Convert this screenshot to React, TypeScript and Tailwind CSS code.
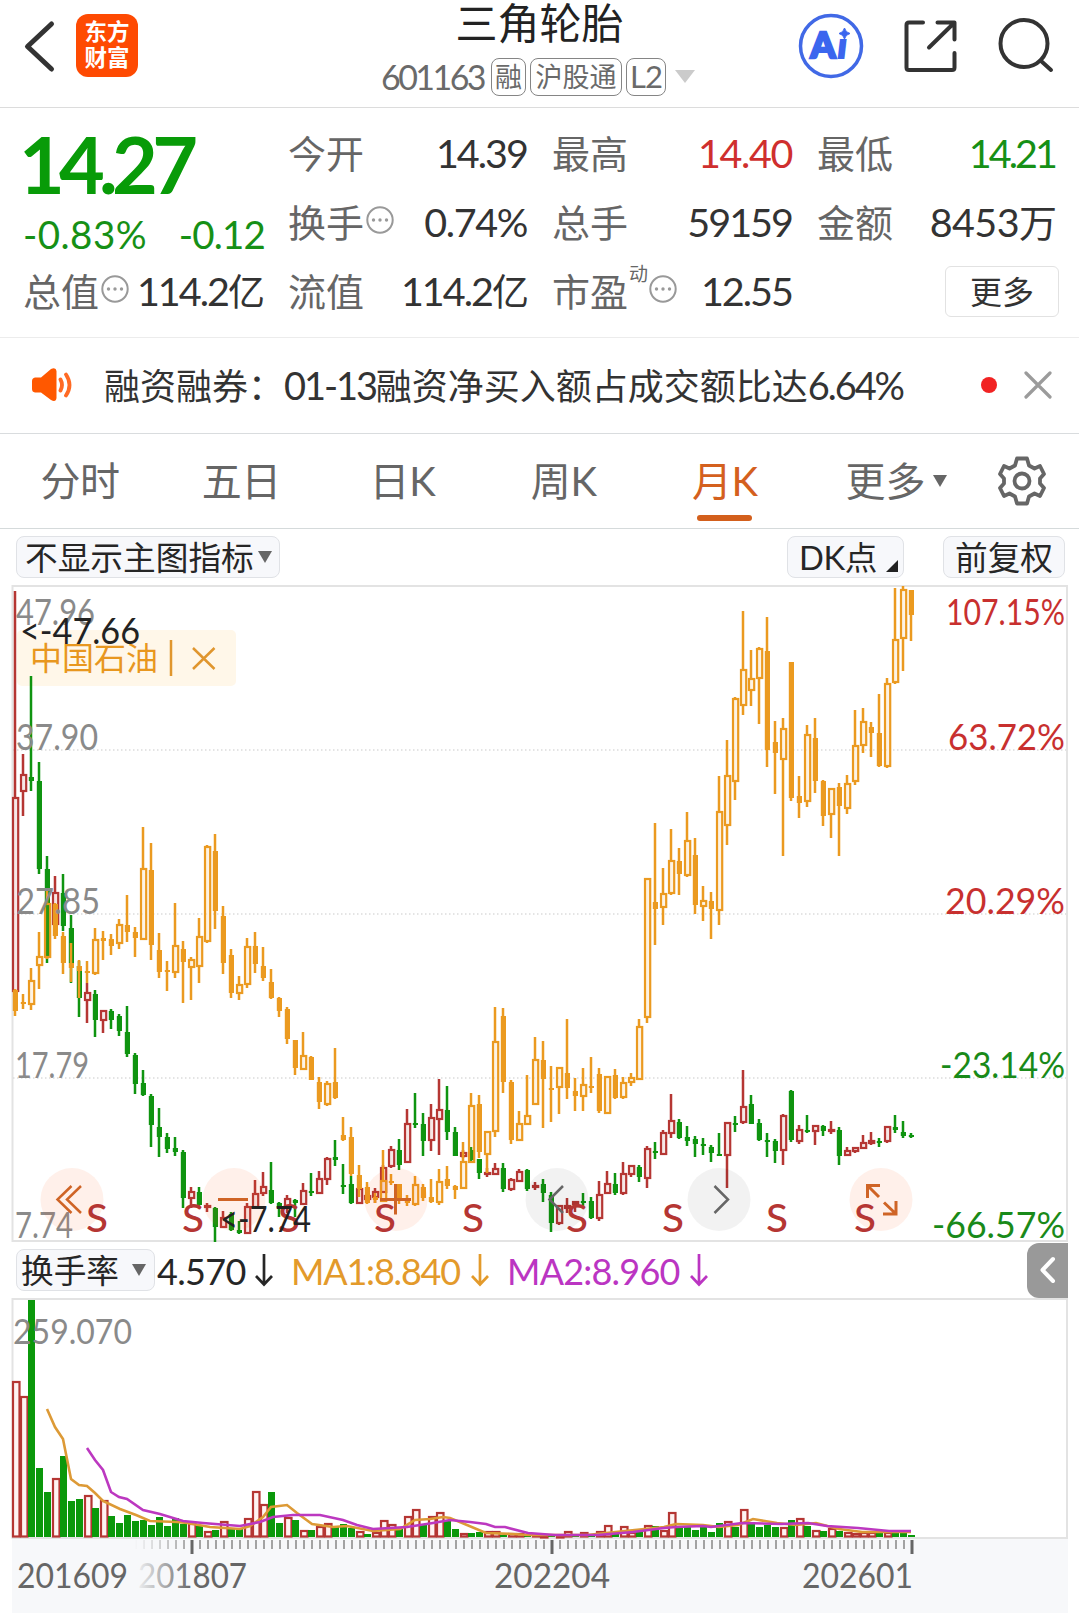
import { ReactNode } from "react";

// [high, bodyTop, bodyBottom, low, filled]
type Candle = [number, number, number, number, number];

const stock: Candle[] = [
  [591, 797, 992, 992, 0], [754, 774, 792, 816, 0], [676, 777, 781, 791, 1], [762, 781, 869, 874, 1],
  [856, 869, 958, 963, 1], [876, 892, 925, 925, 0], [874, 893, 926, 931, 1], [915, 928, 963, 983, 1],
  [961, 966, 998, 1017, 1], [983, 992, 1001, 1023, 0], [990, 994, 1020, 1037, 1], [1010, 1010, 1021, 1033, 0],
  [1009, 1011, 1020, 1029, 1], [1014, 1016, 1031, 1036, 1], [1006, 1032, 1054, 1057, 1], [1053, 1055, 1084, 1094, 1],
  [1070, 1083, 1095, 1096, 1], [1094, 1096, 1125, 1147, 1], [1108, 1127, 1137, 1157, 1], [1133, 1137, 1149, 1153, 1],
  [1137, 1148, 1152, 1156, 1], [1150, 1152, 1198, 1208, 1], [1187, 1191, 1199, 1208, 0], [1187, 1192, 1205, 1207, 1],
  [1203, 1205, 1208, 1212, 0], [1207, 1208, 1227, 1242, 1], [1211, 1217, 1228, 1228, 0], [1212, 1214, 1230, 1231, 1],
  [1221, 1230, 1233, 1234, 1], [1203, 1206, 1234, 1234, 0], [1180, 1193, 1208, 1208, 0], [1172, 1186, 1194, 1196, 0],
  [1162, 1190, 1203, 1204, 1], [1202, 1203, 1208, 1217, 1], [1195, 1198, 1207, 1213, 0], [1199, 1200, 1203, 1217, 1],
  [1183, 1190, 1205, 1205, 0], [1173, 1191, 1193, 1196, 1], [1171, 1178, 1194, 1194, 0], [1157, 1158, 1180, 1185, 0],
  [1140, 1157, 1160, 1166, 1], [1164, 1185, 1187, 1194, 1], [1176, 1184, 1203, 1204, 1], [1187, 1188, 1204, 1204, 0],
  [1192, 1195, 1200, 1203, 0], [1188, 1191, 1198, 1203, 0], [1165, 1167, 1193, 1193, 0], [1146, 1149, 1167, 1168, 0],
  [1139, 1150, 1165, 1170, 1], [1109, 1123, 1163, 1163, 0], [1093, 1123, 1125, 1128, 1], [1113, 1124, 1141, 1156, 1],
  [1104, 1117, 1141, 1151, 0], [1079, 1109, 1120, 1155, 0], [1086, 1110, 1132, 1140, 1], [1127, 1132, 1156, 1156, 1],
  [1150, 1152, 1157, 1158, 0], [1147, 1150, 1160, 1163, 1], [1159, 1159, 1173, 1179, 1], [1168, 1172, 1175, 1177, 0],
  [1163, 1168, 1175, 1175, 0], [1163, 1168, 1189, 1192, 1], [1178, 1179, 1190, 1191, 0], [1169, 1171, 1182, 1182, 0],
  [1169, 1170, 1189, 1191, 1], [1182, 1185, 1188, 1190, 0], [1179, 1184, 1193, 1202, 1], [1192, 1195, 1223, 1232, 1],
  [1205, 1205, 1224, 1225, 0], [1198, 1205, 1209, 1213, 0], [1201, 1201, 1205, 1212, 0], [1193, 1201, 1203, 1207, 1],
  [1197, 1201, 1218, 1219, 1], [1181, 1194, 1219, 1221, 0], [1171, 1183, 1194, 1194, 0], [1173, 1184, 1193, 1195, 1],
  [1162, 1173, 1194, 1195, 0], [1165, 1165, 1175, 1177, 0], [1165, 1167, 1177, 1182, 1], [1146, 1148, 1179, 1188, 0],
  [1142, 1151, 1153, 1159, 1], [1130, 1132, 1155, 1155, 0], [1094, 1120, 1134, 1138, 0], [1119, 1122, 1138, 1139, 1],
  [1126, 1137, 1141, 1146, 1], [1136, 1139, 1144, 1157, 1], [1138, 1144, 1146, 1155, 1], [1145, 1147, 1153, 1162, 1],
  [1133, 1154, 1156, 1156, 1], [1122, 1122, 1156, 1188, 0], [1116, 1123, 1125, 1132, 1], [1070, 1106, 1123, 1124, 0],
  [1095, 1104, 1124, 1124, 1], [1119, 1123, 1140, 1141, 1], [1133, 1140, 1141, 1157, 1], [1139, 1141, 1151, 1163, 1],
  [1114, 1115, 1151, 1165, 0], [1090, 1091, 1140, 1142, 1], [1125, 1129, 1142, 1144, 0], [1115, 1130, 1132, 1133, 1],
  [1125, 1125, 1132, 1145, 0], [1125, 1126, 1131, 1136, 1], [1121, 1129, 1131, 1134, 0], [1127, 1130, 1156, 1165, 1],
  [1147, 1150, 1156, 1156, 0], [1147, 1147, 1152, 1153, 0], [1135, 1142, 1149, 1149, 0], [1132, 1140, 1144, 1145, 0],
  [1138, 1141, 1143, 1147, 1], [1126, 1126, 1142, 1143, 0], [1115, 1127, 1130, 1133, 1], [1121, 1132, 1136, 1138, 1],
  [1133, 1135, 1137, 1138, 1],
];

const compare: Candle[] = [
  [989, 990, 1011, 1016, 1], [994, 1002, 1004, 1009, 1], [968, 980, 1005, 1010, 0], [932, 956, 966, 989, 0],
  [888, 903, 958, 959, 0], [903, 904, 936, 939, 1], [932, 936, 963, 974, 1], [943, 963, 968, 982, 1],
  [960, 966, 971, 998, 1], [961, 971, 973, 983, 1], [928, 939, 974, 975, 0], [931, 938, 941, 960, 1],
  [934, 939, 946, 955, 1], [919, 924, 944, 949, 0], [895, 925, 932, 942, 1], [927, 932, 938, 957, 1],
  [827, 868, 940, 940, 0], [843, 870, 945, 960, 1], [933, 950, 972, 978, 1], [961, 970, 972, 991, 1],
  [903, 945, 973, 978, 0], [941, 949, 962, 1003, 1], [957, 959, 968, 1000, 0], [918, 936, 967, 983, 0],
  [845, 846, 942, 943, 0], [834, 851, 911, 929, 1], [906, 916, 963, 974, 1], [949, 955, 993, 998, 1],
  [976, 984, 994, 1000, 0], [938, 946, 985, 988, 0], [932, 946, 964, 973, 1], [947, 966, 978, 981, 1],
  [969, 982, 998, 999, 1], [997, 998, 1011, 1017, 1], [1007, 1009, 1039, 1044, 1], [1040, 1040, 1068, 1075, 1],
  [1032, 1055, 1070, 1070, 0], [1056, 1057, 1080, 1080, 1], [1077, 1082, 1102, 1109, 1], [1081, 1083, 1105, 1106, 0],
  [1048, 1082, 1098, 1099, 1], [1117, 1135, 1140, 1141, 1], [1127, 1137, 1174, 1176, 1], [1165, 1175, 1189, 1197, 1],
  [1182, 1187, 1203, 1204, 1], [1193, 1197, 1200, 1203, 1], [1150, 1180, 1202, 1202, 0], [1174, 1181, 1183, 1185, 1],
  [1184, 1184, 1199, 1204, 1], [1195, 1199, 1203, 1206, 1], [1176, 1184, 1205, 1206, 0], [1184, 1187, 1198, 1201, 1],
  [1179, 1197, 1202, 1203, 1], [1169, 1181, 1203, 1205, 0], [1166, 1179, 1186, 1189, 1], [1185, 1186, 1190, 1199, 1],
  [1142, 1161, 1189, 1189, 0], [1093, 1105, 1163, 1163, 0], [1095, 1104, 1152, 1158, 1], [1131, 1131, 1155, 1173, 0],
  [1007, 1041, 1132, 1137, 0], [1008, 1016, 1082, 1093, 1], [1080, 1082, 1140, 1144, 1], [1111, 1123, 1141, 1141, 0],
  [1075, 1115, 1125, 1125, 0], [1037, 1059, 1105, 1105, 0], [1041, 1060, 1079, 1128, 1], [1066, 1088, 1090, 1122, 1],
  [1067, 1067, 1088, 1114, 0], [1019, 1073, 1088, 1099, 1], [1078, 1091, 1096, 1111, 1], [1068, 1084, 1097, 1111, 0],
  [1057, 1086, 1088, 1093, 1], [1068, 1074, 1111, 1113, 1], [1076, 1076, 1114, 1114, 0], [1069, 1075, 1098, 1099, 1],
  [1077, 1082, 1098, 1099, 0], [1073, 1077, 1083, 1086, 0], [1019, 1026, 1080, 1080, 0], [878, 878, 1018, 1023, 0],
  [823, 902, 909, 945, 1], [868, 893, 908, 925, 0], [829, 860, 894, 895, 0], [848, 861, 874, 895, 1],
  [812, 840, 876, 877, 0], [838, 855, 905, 914, 1], [886, 900, 907, 921, 0], [892, 901, 909, 939, 1],
  [776, 811, 911, 925, 0], [740, 775, 826, 845, 0], [697, 698, 782, 800, 0], [611, 669, 706, 715, 0],
  [650, 678, 691, 706, 0], [647, 648, 679, 724, 0], [617, 651, 750, 767, 1], [721, 742, 753, 794, 1],
  [718, 728, 760, 856, 0], [662, 662, 798, 801, 1], [776, 796, 803, 818, 1], [725, 734, 802, 807, 0],
  [718, 738, 781, 793, 1], [780, 781, 816, 826, 1], [788, 788, 815, 838, 0], [783, 787, 806, 856, 1],
  [775, 783, 809, 814, 0], [710, 745, 782, 785, 0], [708, 721, 746, 753, 0], [722, 727, 733, 757, 1],
  [694, 733, 766, 767, 1], [678, 683, 767, 768, 0], [588, 639, 683, 684, 0], [586, 589, 639, 671, 0],
  [590, 590, 615, 641, 1],
];

// turnover bar heights, negative = green month
const turnover = [
  156, 141, -237, -69, -45, 59, -81, -36, -38, 42, -29, 37, -21, -14, -22, -16, -17, -12, -20, -11,
  -19, -13, 14, -11, 6, -7, 16, -8, -8, 19, 46, 33, -45, -14, 20, -17, 7, -7, 11, 14,
  -10, -13, -9, 6, -3, 5, 17, 13, -8, 21, 28, -12, 21, 25, -16, -8, 4, -4, -5, 6,
  6, -2, 4, 4, -2, 2, 1, -1, 1, 6, -2, 5, -2, 6, 12, -4, 11, 5, -7, 12,
  -11, 7, 25, -10, -10, -7, -10, -5, -14, 16, -10, 28, -15, -10, -12, -10, 10, -17, 19, -11,
  7, -6, 9, -6, 5, 4, 5, 5, -4, 5, -5, -5, -2,
];

const ma1 =
  "47,1409 55,1427 63,1439 71,1479 79,1485 87,1486 95,1493 103,1501 120,1509 136,1515 150,1521 177,1522 187,1523 210,1527 240,1529 250,1526 263,1517 271,1507 287,1505 297,1513 312,1524 333,1527 347,1526 373,1531 400,1529 415,1520 430,1519 443,1517 450,1518 467,1525 486,1533 513,1534 528,1535 587,1535 625,1531 664,1527 676,1524 703,1525 719,1527 738,1525 753,1519 777,1523 796,1525 816,1523 839,1529 862,1532 889,1532 911,1532";
const ma2 =
  "87,1448 95,1460 103,1470 111,1492 119,1497 127,1499 143,1510 160,1514 183,1521 203,1523 240,1526 260,1522 273,1517 293,1515 320,1515 343,1520 357,1525 373,1529 407,1527 433,1523 450,1520 470,1522 486,1524 495,1527 505,1527 528,1533 555,1535 598,1535 633,1532 664,1528 676,1527 703,1526 711,1527 742,1523 781,1524 808,1523 827,1526 858,1528 889,1531 911,1531";

const RED = "#b53633";
const GREEN = "#0f9410";
const ORANGE = "#eb9a20";

function Candles({ data, up, down }: { data: Candle[]; up: string; down: string }) {
  return (
    <g>
      {data.map(([high, top, bottom, low, filled], i) => {
        const x = 15 + i * 8;
        const color = filled ? down : up;
        const height = Math.max(bottom - top, 2);
        return (
          <g key={i}>
            <rect x={x - 1.25} y={high} width={2.5} height={Math.max(top - high, 0)} fill={color} />
            <rect x={x - 1.25} y={bottom} width={2.5} height={Math.max(low - bottom, 0)} fill={color} />
            {filled ? (
              <rect x={x - 2.2} y={top} width={5.2} height={height} fill={color} />
            ) : (
              <rect
                x={x - 2}
                y={top + 1}
                width={5.2}
                height={Math.max(height - 2, 1)}
                fill={color}
                fillOpacity={0.12}
                stroke={color}
                strokeWidth={2.2}
              />
            )}
          </g>
        );
      })}
    </g>
  );
}

function Label({ x, y, width, size = 36, fill = "#8a8a8a", weight = 400, children }: {
  x: number;
  y: number;
  width: number;
  size?: number;
  fill?: string;
  weight?: number;
  children: string;
}) {
  return (
    <text x={x} y={y} textLength={width} lengthAdjust="spacingAndGlyphs" fontSize={size} fontWeight={weight} fill={fill}>
      {children}
    </text>
  );
}

function MainChart() {
  return (
    <svg className="block overflow-visible" width="1079" height="657" viewBox="0 585 1079 657">
      <path d="M12.5 1241V586H1067V1241Z" fill="none" stroke="#e3e3e3" strokeWidth="2" />
      <path d="M13 750H1066M13 914H1066M13 1078H1066" stroke="#dcdcdc" strokeWidth="1.5" strokeDasharray="1.5 2.5" />
      <rect x="17" y="630" width="219" height="56" rx="5" fill="#fff7e9" />

      <Candles data={stock} up={RED} down={GREEN} />
      <Candles data={compare} up={ORANGE} down={ORANGE} />

      <Label x={16} y={625} width={79}>47.96</Label>
      <Label x={16} y={750} width={82}>37.90</Label>
      <Label x={16} y={914} width={84}>27.85</Label>
      <Label x={15} y={1078} width={74}>17.79</Label>
      <Label x={15} y={1238} width={58}>7.74</Label>

      <Label x={30} y={670} width={128} size={32} fill="#e8971f">中国石油</Label>
      <path d="M171 640V676M193 648L214.500 669M214.500 648L193 669" stroke="#e0962e" strokeWidth="2.500" fill="none" />
      <Label x={20} y={644} width={120} fill="#222">&lt;-47.66</Label>

      <Label x={946} y={625} width={119} fill="#c8302f">107.15%</Label>
      <Label x={948} y={750} width={117} fill="#c8302f">63.72%</Label>
      <Label x={945} y={914} width={120} fill="#c8302f">20.29%</Label>
      <Label x={940} y={1078} width={125} fill="#198a19">-23.14%</Label>
      <Label x={932} y={1238} width={133} fill="#198a19">-66.57%</Label>

      {[72, 234, 396, 557, 719, 881].map((cx) => (
        <circle
          key={cx}
          cx={cx}
          cy="1199.500"
          r="31.500"
          fill={cx === 557 || cx === 719 ? "#000" : "#ff5a14"}
          fillOpacity={cx === 557 || cx === 719 ? 0.05 : 0.09}
        />
      ))}
      {[97, 193, 289, 385, 473, 577, 673, 777, 865].map((cx) => (
        <Label key={cx} x={cx - 11} y={1231.5} width={22} size={39} weight={500} fill={RED}>S</Label>
      ))}
      <Label x={220} y={1232} width={91} fill="#222">&lt;-7.74</Label>

      <g fill="none" stroke="#cf6426" strokeWidth="2.500">
        <path d="M71.500 1186L57.500 1199.500L71.500 1213M81 1186L67 1199.500L81 1213" />
        <path d="M218 1199.500H248M380 1199.500H411M395.500 1184V1214.500" strokeWidth="3" />
        <path d="M880 1185.500H867.500V1198M868 1186L879 1197M883 1214H896V1201M895.500 1213.500L884 1202.500" strokeWidth="3" />
      </g>
      <g fill="none" stroke="#666" strokeWidth="2.500">
        <path d="M563 1186L549.500 1199.500L563 1213" />
        <path d="M714.500 1186L728 1199.500L714.500 1213" />
      </g>
    </svg>
  );
}

function TurnoverChart() {
  return (
    <svg className="block" width="1079" height="315" viewBox="0 1298 1079 315">
      <defs>
        <linearGradient id="axis-fade" gradientUnits="userSpaceOnUse" x1="134" x2="192" y1="0" y2="0">
          <stop offset="0" stopColor="#f7f8fa" />
          <stop offset="1" stopColor="#f7f8fa" stopOpacity="0" />
        </linearGradient>
      </defs>
      <rect x="12" y="1539" width="1056" height="74" fill="#f7f8fa" />
      <path d="M12.500 1538V1299H1067V1538Z" fill="none" stroke="#e3e3e3" strokeWidth="2" />

      {turnover.map((value, i) => {
        const h = Math.abs(value);
        const y = 1537 - h;
        return value < 0 ? (
          <rect key={i} x={12 + i * 8} y={y} width={7} height={h} fill="#0b980b" />
        ) : (
          <rect key={i} x={13 + i * 8} y={y + 1} width={6.5} height={Math.max(h - 1.5, 0.5)} fill="#fff3f2" stroke={RED} strokeWidth={2.2} />
        );
      })}
      <polyline points={ma1} fill="none" stroke="#dd9a36" strokeWidth="2.600" />
      <polyline points={ma2} fill="none" stroke="#bc38c0" strokeWidth="2.600" />
      <Label x={13} y={1344} width={119} size={34}>259.070</Label>

      {turnover.map((_, i) =>
        i < 15 ? null : i === 22 || i === 67 || i === 112 ? (
          <rect key={i} x={14.5 + i * 8} y={1540} width={3} height={14} fill="#666" />
        ) : (
          <rect key={i} x={15 + i * 8} y={1540} width={2} height={9} fill="#a3a3a3" />
        )
      )}
      <Label x={17} y={1588} width={111} size={34} fill="#666">201609</Label>
      <Label x={138} y={1588} width={109} size={34} fill="#666">201807</Label>
      <Label x={494} y={1588} width={116} size={34} fill="#666">202204</Label>
      <Label x={802} y={1588} width={111} size={34} fill="#666">202601</Label>
      <rect x="132" y="1540" width="60" height="56" fill="url(#axis-fade)" />
    </svg>
  );
}

function Header() {
  return (
    <header className="flex h-[108px] items-start border-b border-[#dcdcdc]">
      <div className="flex w-[381px] items-center pt-[14px] pl-[22px]">
        <svg width="36" height="56" viewBox="0 0 36 56" fill="none" stroke="#333" strokeWidth="5" strokeLinecap="round" strokeLinejoin="round">
          <path d="M29.500 6L5.500 28.500L29.500 51" />
        </svg>
        <div className="ml-[18px] flex h-[63px] w-[62px] flex-col items-center justify-center rounded-xl bg-[#fe4a02] pb-[2px] text-[22.500px] leading-[26px] font-bold text-white">
          <span>东方</span>
          <span>财富</span>
        </div>
      </div>
      <div className="flex w-[317px] flex-col items-center">
        <h1 className="text-[42px] leading-[47px] text-[#222]">三角轮胎</h1>
        <div className="mt-[10px] flex h-[39px] w-full items-center text-[27px] whitespace-nowrap text-[#6a6a6a]">
          <span className="w-[110px] text-[34px] tracking-[-0.075em]">601163</span>
          <span className="flex h-[38px] w-[35px] items-center justify-center rounded-lg border-[1.500px] border-[#858585]">融</span>
          <span className="ml-1 flex h-[38px] w-[92px] items-center justify-center rounded-lg border-[1.500px] border-[#858585]">沪股通</span>
          <span className="ml-1 flex h-[38px] w-[40px] items-center justify-center rounded-lg border-[1.500px] border-[#858585] text-[31px] tracking-[-0.03em]">L2</span>
          <svg className="ml-[9px]" width="20" height="13"><path d="M0 0H20L10 13Z" fill="#cbcbcb" /></svg>
        </div>
      </div>
      <div className="flex flex-1 pt-[13px] pl-[100px]">
        <svg width="66" height="66" viewBox="0 0 66 66">
          <circle cx="33" cy="33" r="30.500" fill="none" stroke="#4169e6" strokeWidth="3.500" />
          <text x="12.500" y="45" textLength="25" lengthAdjust="spacingAndGlyphs" fontSize="36" fontWeight="900" fill="#3b66ee" stroke="#3b66ee" strokeWidth="2.500">A</text>
          <text x="40" y="45" fontSize="34" fontWeight="900" fontStyle="italic" fill="#3b66ee" stroke="#3b66ee" strokeWidth="2">ı</text>
          <path d="M46.500 15Q47.500 19.500 52 20.500Q47.500 21.500 46.500 26Q45.500 21.500 41 20.500Q45.500 19.500 46.500 15Z" fill="#3b66ee" stroke="#3b66ee" />
        </svg>
        <svg className="ml-[40px]" width="56" height="60" viewBox="0 0 56 60" fill="none" stroke="#333" strokeWidth="4" strokeLinecap="round" strokeLinejoin="round">
          <path d="M19 9.500H5Q2.500 9.500 2.500 12V54.500Q2.500 57 5 57H48Q50.500 57 50.500 54.500V40" />
          <path d="M33.500 9.500H50.500V26.500M50 10L25 34.500" />
        </svg>
        <svg className="ml-[37px]" width="60" height="62" viewBox="0 0 60 62" fill="none" stroke="#333" strokeWidth="4" strokeLinecap="round">
          <circle cx="27" cy="30.500" r="23.500" />
          <path d="M43.500 47.500L54 57" />
        </svg>
      </div>
    </header>
  );
}

function Dots() {
  return (
    <svg className="mb-[3px] ml-[2px] shrink-0" width="28" height="28" viewBox="0 0 28 28" fill="#999">
      <circle cx="14" cy="14" r="12.700" fill="none" stroke="#999" strokeWidth="2" />
      <circle cx="7.500" cy="14" r="1.700" />
      <circle cx="14" cy="14" r="1.700" />
      <circle cx="20.500" cy="14" r="1.700" />
    </svg>
  );
}

function Field({ label, children, hint, sup }: { label: string; children: ReactNode; hint?: boolean; sup?: string }) {
  return (
    <div className="flex h-[69px] items-center pb-[2px] whitespace-nowrap">
      <span className="text-[38px] text-[#666]">{label}</span>
      {sup && <span className="-mt-[34px] ml-[1px] -mr-[1px] text-[19px] text-[#666]">{sup}</span>}
      {hint && <Dots />}
      <span className="mr-[2px] ml-auto text-[39.500px] tracking-[-0.050em] text-[#333]">{children}</span>
    </div>
  );
}

function Quote() {
  return (
    <section className="flex h-[230px] gap-[23px] border-b border-[#ececec] pt-[11px] pr-[21px] pl-[23px]">
      <div className="w-[242px]">
        <div className="-ml-[4px] h-[92px] text-[79px] leading-[89px] font-bold tracking-[-0.073em] text-[#089b08]">14.27</div>
        <div className="flex h-[46px] items-center justify-between text-[38.500px] text-[#169016]">
          <span className="tracking-[0.012em]">-0.83%</span>
          <span className="tracking-[-0.022em]">-0.12</span>
        </div>
        <Field label="总值" hint>114.2<span className="text-[37px]">亿</span></Field>
      </div>
      <div className="w-[241px]">
        <Field label="今开">14.39</Field>
        <Field label="换手" hint><span className="tracking-[-0.035em]">0.74%</span></Field>
        <Field label="流值">114.2<span className="text-[37px]">亿</span></Field>
      </div>
      <div className="w-[242px]">
        <Field label="最高"><span className="tracking-[-0.035em] text-[#cf2f2e]">14.40</span></Field>
        <Field label="总手">59159</Field>
        <Field label="市盈" sup="动" hint>12.55</Field>
      </div>
      <div className="w-[240px]">
        <Field label="最低"><span className="tracking-[-0.075em] text-[#169016]">14.21</span></Field>
        <Field label="金额"><span className="tracking-[-0.015em]">8453</span><span className="text-[38px]">万</span></Field>
        <div className="mt-[9px] -mr-[2px] ml-auto flex h-[51px] w-[114px] items-center justify-center rounded-md border-[1.500px] border-[#e2e2e2] text-[32px] text-[#333]">
          更多
        </div>
      </div>
    </section>
  );
}

function News() {
  return (
    <section className="flex h-[96px] items-center border-b border-[#d9dcde] pb-[2px] pl-[31px] whitespace-nowrap">
      <svg width="42" height="36" viewBox="0 0 42 36" fill="#ff5800">
        <path d="M4 10.500H10L20 2Q25 0 25.500 4V31Q25 35.500 20 33L10 25.500H4Q1 25 1 22V14Q1 11 4 10.500Z" />
        <path d="M29.500 12.500Q32.500 18 29.500 23.500M35 7.500Q42 18 35 28.500" fill="none" stroke="#ff6a24" strokeWidth="3.800" strokeLinecap="round" />
      </svg>
      <span className="ml-[31px] text-[36px] text-[#333]">
        融资融券：<span className="text-[38px] tracking-[-0.055em]">01-13</span>融资净买入额占成交额比达
        <span className="text-[38px] tracking-[-0.055em]">6.64%</span>
      </span>
      <span className="mr-[27px] ml-auto h-4 w-4 rounded-full bg-[#f12323]" />
      <svg className="mr-[27px]" width="28" height="28" stroke="#9b9b9b" strokeWidth="3.200" strokeLinecap="round">
        <path d="M2 2L26 26M26 2L2 26" />
      </svg>
    </section>
  );
}

function Tabs() {
  return (
    <nav className="flex h-[95px] items-center border-b border-[#d5dadb] text-[40px] whitespace-nowrap text-[#666]">
      {["分时", "五日", "日K", "周K", "月K"].map((tab) => (
        <div key={tab} className={`relative flex h-full w-[161.200px] items-center justify-center ${tab === "月K" ? "text-[#d4601e]" : ""}`}>
          <span className="-ml-[1px] tracking-[-0.010em]">{tab}</span>
          {tab === "月K" && <span className="absolute bottom-[7px] left-[52px] h-[6px] w-[55px] rounded-full bg-[#d35f1c]" />}
        </div>
      ))}
      <span className="ml-[39.500px]">更多</span>
      <svg className="ml-2" width="14" height="12"><path d="M0 0H14L7 12Z" fill="#666" /></svg>
      <svg className="ml-[51px]" width="48" height="50" viewBox="0 0 48 50" fill="none" stroke="#666" strokeWidth="3.800" strokeLinejoin="round">
        <path d="M19 2.500H29L31 9.500L36.500 12.500L42 10L46 18L42 22.500V27.500L46 32L42 40L36.500 37.500L31 40.500L29 47.500H19L17 40.500L11.500 37.500L6 40L2 32L6 27.500V22.500L2 18L6 10L11.500 12.500L17 9.500Z" />
        <circle cx="24" cy="25" r="7.500" />
      </svg>
    </nav>
  );
}

function Toolbar() {
  return (
    <div className="flex h-[56px] items-start pt-[7px] pl-4 text-[32.700px] whitespace-nowrap text-[#262626]">
      <div className="flex h-[42px] w-[264px] items-center rounded-lg border border-[#e0e2e6] bg-[#f7f8fb] pt-[2px] pl-[8px]">
        不显示主图指标
        <svg className="mb-[2px] ml-[4px]" width="14" height="12"><path d="M0 0H14L7 12Z" fill="#666" /></svg>
      </div>
      <div className="ml-[507px] flex h-[42px] w-[117px] items-center rounded-lg border border-[#e0e2e6] bg-[#f7f8fb] pt-[2px] pl-[11px]">
        <span className="w-[87px] tracking-[-0.01em]">DK点</span>
        <svg className="mt-[16px]" width="12" height="12"><path d="M12 0V12H0Z" fill="#222" /></svg>
      </div>
      <div className="ml-[39px] flex h-[42px] w-[122px] items-center justify-center rounded-lg border border-[#e0e2e6] bg-[#f7f8fb] pt-[2px]">
        前复权
      </div>
    </div>
  );
}

function DownArrow() {
  return (
    <svg width="18" height="34" viewBox="0 0 18 34" fill="none" stroke="currentColor" strokeWidth="2.700">
      <path d="M9 1V31M1 23L9 31.500L17 23" />
    </svg>
  );
}

function IndicatorBar() {
  return (
    <div className="flex h-[56px] items-center pr-[11px] pl-4 text-[36px] whitespace-nowrap text-[#262626]">
      <div className="flex h-[42px] w-[139px] items-center rounded-lg border border-[#e0e2e6] bg-[#f7f8fb] pt-[2px] pl-[4px] text-[32.700px]">
        换手率
        <svg className="mb-[2px] ml-[13px]" width="14" height="12"><path d="M0 0H14L7 12Z" fill="#666" /></svg>
      </div>
      <span className="ml-[2px] w-[98px] pt-[2px] tracking-[-0.018em]">4.570</span>
      <DownArrow />
      <span className="ml-[18px] flex items-center text-[#e39a2b]">
        <span className="w-[180px] pt-[2px] tracking-[-0.033em]">MA1:8.840</span>
        <DownArrow />
      </span>
      <span className="ml-[18px] flex items-center text-[#bb35c2]">
        <span className="w-[183px] pt-[2px] tracking-[-0.022em]">MA2:8.960</span>
        <DownArrow />
      </span>
      <div className="ml-auto flex h-[55px] w-[41px] items-center justify-center rounded-l-xl bg-[#999]">
        <svg width="18" height="28" fill="none" stroke="#fff" strokeWidth="4" strokeLinecap="round" strokeLinejoin="round">
          <path d="M14 3L3.500 14L14 25" />
        </svg>
      </div>
    </div>
  );
}

export default function App() {
  return (
    <main className="h-[1613px] w-[1079px] overflow-hidden bg-white font-['Lato','Noto_Sans_CJK_SC',sans-serif] leading-none">
      <Header />
      <Quote />
      <News />
      <Tabs />
      <Toolbar />
      <MainChart />
      <IndicatorBar />
      <TurnoverChart />
    </main>
  );
}
